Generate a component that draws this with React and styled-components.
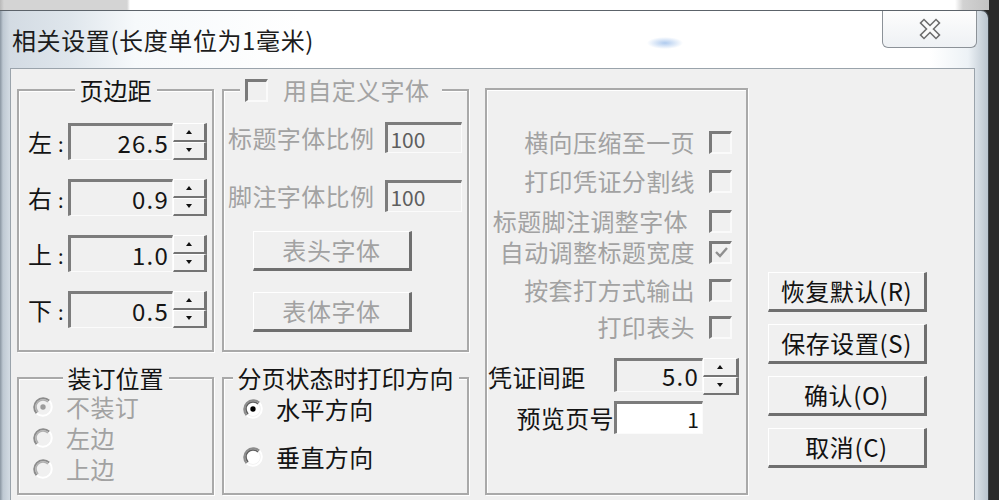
import React from "react";
import styled, { createGlobalStyle } from "styled-components";

const FONT = `"Noto Sans CJK SC", "Noto Sans", sans-serif`;

const margins = [
  { label: "左", value: "26.5" },
  { label: "右", value: "0.9" },
  { label: "上", value: "1.0" },
  { label: "下", value: "0.5" },
];

const options = [
  { text: "横向压缩至一页", mt: 40 },
  { text: "打印凭证分割线", mt: 15 },
  { text: "标题脚注调整字体", mt: 16, shift: 7 },
  { text: "自动调整标题宽度", mt: 7, checked: true },
  { text: "按套打方式输出", mt: 14 },
  { text: "打印表头", mt: 13 },
];

const actions = ["恢复默认(R)", "保存设置(S)", "确认(O)", "取消(C)"];

function Radio({ checked, disabled }) {
  return (
    <RadioMark viewBox="0 0 20 20">
      <path d="M3.64 16.36A9 9 0 0 1 16.36 3.64" stroke="#8c8c8c" strokeWidth="2" fill="none" />
      <path d="M16.36 3.64A9 9 0 0 1 3.64 16.36" stroke="#ffffff" strokeWidth="2" fill="none" />
      <circle cx="10" cy="10" r="7" fill={disabled ? "#f0f0f0" : "#ffffff"} />
      <path
        d="M5.05 14.95A7 7 0 0 1 14.95 5.05"
        stroke={disabled ? "#b0b0b0" : "#606060"}
        strokeWidth="1.6"
        fill="none"
      />
      {checked && <circle cx="10" cy="10" r="2.7" fill={disabled ? "#9c9c9c" : "#000"} />}
    </RadioMark>
  );
}

function Spinner({ width }) {
  return (
    <SpinBox $w={width}>
      <SpinBtn>
        <ArrowUp />
      </SpinBtn>
      <SpinBtn>
        <ArrowDown />
      </SpinBtn>
    </SpinBox>
  );
}

function CheckBox({ checked }) {
  return (
    <Check>
      {checked && (
        <svg width="17" height="17" viewBox="0 0 17 17">
          <polyline points="3,8 7,12 14,4" stroke="#8f8f8f" strokeWidth="2.4" fill="none" />
        </svg>
      )}
    </Check>
  );
}

export default function App() {
  return (
    <Screen>
      <GlobalStyle />
      <Desktop>
        <BehindStrip />
        <Window>
          <TitleBar>
            <Title>相关设置(长度单位为1毫米)</Title>
            <CloseButton>
              <svg width="26" height="22" viewBox="0 0 26 22">
                <path d="M7 5 L19 17 M19 5 L7 17" stroke="#6c6c6c" strokeWidth="6.5" strokeLinecap="square" />
                <path d="M7 5 L19 17 M19 5 L7 17" stroke="#fbfbfb" strokeWidth="3.4" strokeLinecap="square" />
              </svg>
            </CloseButton>
          </TitleBar>
          <Frame>
            <Client>
              <Group>
                <Legend>页边距</Legend>
                <MarginList>
                  {margins.map((m) => (
                    <MarginRow key={m.label}>
                      <MarginLabel>
                        {m.label}
                        <Colon>:</Colon>
                      </MarginLabel>
                      <Edit $w={105} $h={37}>
                        <Value>{m.value}</Value>
                      </Edit>
                      <Spinner width={34} />
                    </MarginRow>
                  ))}
                </MarginList>
              </Group>

              <Group>
                <Legend $left={16} $dim>
                  <CheckBox />
                  <LegendText>用自定义字体</LegendText>
                </Legend>
                <FontList>
                  <FontRow>
                    <DimLabel>标题字体比例</DimLabel>
                    <Edit $w={77} $h={31} $left>
                      <SmallValue>100</SmallValue>
                    </Edit>
                  </FontRow>
                  <FontRow $mt={27}>
                    <DimLabel>脚注字体比例</DimLabel>
                    <Edit $w={77} $h={32} $left>
                      <SmallValue>100</SmallValue>
                    </Edit>
                  </FontRow>
                  <PushButton $dim $mt={19} $ml={25}>表头字体</PushButton>
                  <PushButton $dim $mt={21} $ml={25}>表体字体</PushButton>
                </FontList>
              </Group>

              <SideGroup>
                <OptionList>
                  {options.map((o) => (
                    <OptionRow key={o.text} $mt={o.mt}>
                      <DimLabel style={{ marginRight: o.shift || 0 }}>{o.text}</DimLabel>
                      <CheckBox checked={o.checked} />
                    </OptionRow>
                  ))}
                </OptionList>
                <SpinGrid>
                  <FieldLabel>凭证间距</FieldLabel>
                  <SpinField>
                    <Edit $w={89} $h={34}>
                      <Value>5.0</Value>
                    </Edit>
                    <Spinner width={36} />
                  </SpinField>
                  <FieldLabel $end>预览页号</FieldLabel>
                  <Edit $w={89} $h={33} $white>
                    <SmallValue $dark>1</SmallValue>
                  </Edit>
                </SpinGrid>
              </SideGroup>

              <ButtonColumn>
                {actions.map((a) => (
                  <PushButton key={a}>{a}</PushButton>
                ))}
              </ButtonColumn>

              <Group>
                <Legend>装订位置</Legend>
                <RadioList $pt={5} $pl={14} $gap={7}>
                  <RadioRow>
                    <Radio checked disabled />
                    <DimLabel>不装订</DimLabel>
                  </RadioRow>
                  <RadioRow>
                    <Radio disabled />
                    <DimLabel>左边</DimLabel>
                  </RadioRow>
                  <RadioRow>
                    <Radio disabled />
                    <DimLabel>上边</DimLabel>
                  </RadioRow>
                </RadioList>
              </Group>

              <Group>
                <Legend>分页状态时打印方向</Legend>
                <RadioList $pt={7} $pl={19} $gap={24}>
                  <RadioRow>
                    <Radio checked />
                    <FieldLabel>水平方向</FieldLabel>
                  </RadioRow>
                  <RadioRow>
                    <Radio />
                    <FieldLabel>垂直方向</FieldLabel>
                  </RadioRow>
                </RadioList>
              </Group>
            </Client>
          </Frame>
        </Window>
      </Desktop>
    </Screen>
  );
}

// Styles
const GlobalStyle = createGlobalStyle`
  body {
    margin: 0;
    background: #2a2a2a;
  }
  * {
    box-sizing: border-box;
  }
`;

const Screen = styled.div`
  width: 999px;
  height: 500px;
  overflow: hidden;
  display: flex;
  background: #2a2a2a;
  font-family: ${FONT};
`;

const Desktop = styled.div`
  width: 989px;
  display: flex;
  flex-direction: column;
`;

const BehindStrip = styled.div`
  height: 10px;
  flex: none;
  background: linear-gradient(
    90deg,
    #b9b9b9 0,
    #d4d4d4 4px,
    #d4d4d4 127px,
    #ffffff 130px,
    #ffffff 955px,
    #d2d2d2 963px,
    #c2c2c2 989px
  );
`;

const Window = styled.div`
  flex: 1;
  display: flex;
  flex-direction: column;
  border-top: 1px solid #5c636a;
  border-right: 1px solid #3d4349;
  border-top-right-radius: 8px;
  background: linear-gradient(
    90deg,
    #8995a1 0,
    #bfc9d3 3px,
    #d3dbe3 10px,
    #dfe6ec 70px,
    #f6f9fb 135px,
    #ffffff 300px,
    #ffffff 930px,
    #edf2f6 968px,
    #bac5cf 988px
  );
`;

const TitleBar = styled.div`
  height: 57px;
  flex: none;
  display: flex;
  justify-content: space-between;
  align-items: flex-start;
  padding-left: 12px;
  background: radial-gradient(
    ellipse 18px 6px at 665px 32px,
    rgba(110, 160, 225, 0.55),
    rgba(110, 160, 225, 0)
  );
`;

const Title = styled.div`
  margin-top: 16px;
  font-size: 24px;
  line-height: 26px;
  color: #1c1c1c;
  letter-spacing: 0.6px;
`;

const CloseButton = styled.div`
  width: 95px;
  height: 37px;
  margin-right: 11px;
  display: flex;
  align-items: center;
  justify-content: center;
  border: 1px solid #8c9298;
  border-top: none;
  border-radius: 0 0 6px 6px;
  background: linear-gradient(#fdfdfd, #eef1f4);
`;

const Frame = styled.div`
  flex: 1;
  display: flex;
  padding: 0 13px 0 10px;
`;

const Client = styled.div`
  flex: 1;
  background: #f0f0f0;
  border: 1px solid #9aa3ab;
  border-bottom: none;
  padding: 9px 0 0 6px;
  display: grid;
  grid-template-columns: 197px 247px 271px 171px;
  grid-template-rows: 274px 129px;
  gap: 14px 8px;
  align-content: start;
`;

const Group = styled.fieldset`
  margin: 0;
  padding: 0;
  min-width: 0;
  border: 2px solid #a9a9a9;
  box-shadow: inset 1px 1px 0 #ffffff, 1px 1px 0 #ffffff;
`;

const SideGroup = styled(Group)`
  grid-column: 3;
  grid-row: 1 / span 2;
  margin: 10px 0 0 8px;
`;

const Legend = styled.legend`
  margin: ${(p) => (p.$left != null ? `0 0 0 ${p.$left}px` : "0 auto")};
  padding: ${(p) => (p.$left != null ? "0 13px 0 5px" : "0 5px")};
  display: flex;
  align-items: center;
  gap: 15px;
  font-size: 24px;
  line-height: 24px;
  height: 24px;
  color: ${(p) => (p.$dim ? "#a3a3a3" : "#141414")};
  background: #f0f0f0;
`;

const LegendText = styled.span`
  letter-spacing: 0.4px;
`;

const MarginList = styled.div`
  display: flex;
  flex-direction: column;
  gap: 19px;
  padding: 21px 0 0 9px;
`;

const MarginRow = styled.div`
  display: flex;
  align-items: center;
  height: 37px;
`;

const MarginLabel = styled.div`
  width: 40px;
  font-size: 24px;
  line-height: 24px;
  color: #141414;
  padding-top: 3px;
`;

const Colon = styled.span`
  margin-left: 6px;
  font-size: 20px;
`;

const Edit = styled.div`
  width: ${(p) => p.$w}px;
  height: ${(p) => p.$h}px;
  flex: none;
  display: flex;
  align-items: center;
  justify-content: ${(p) => (p.$left ? "flex-start" : "flex-end")};
  padding: ${(p) => (p.$left ? "0 0 0 2px" : "0 3px 0 0")};
  border-style: solid;
  border-width: 3px 1px 1px 3px;
  border-color: #7c7c7c #fbfbfb #fbfbfb #7c7c7c;
  background: ${(p) => (p.$white ? "#ffffff" : "#f0f0f0")};
`;

const Value = styled.span`
  font-size: 24px;
  line-height: 24px;
  letter-spacing: 1.2px;
  color: #151515;
`;

const SmallValue = styled.span`
  font-size: 21px;
  line-height: 22px;
  color: ${(p) => (p.$dark ? "#151515" : "#5e5e5e")};
`;

const SpinBox = styled.div`
  width: ${(p) => p.$w}px;
  height: 37px;
  flex: none;
  display: flex;
  flex-direction: column;
`;

const SpinBtn = styled.div`
  flex: 1;
  display: flex;
  align-items: center;
  justify-content: center;
  border-style: solid;
  border-width: 1px 3px 2px 1px;
  border-color: #ffffff #747474 #747474 #ffffff;
  background: #f0f0f0;
`;

const ArrowUp = styled.span`
  width: 0;
  height: 0;
  border-left: 3.5px solid transparent;
  border-right: 3.5px solid transparent;
  border-bottom: 4px solid #111;
`;

const ArrowDown = styled.span`
  width: 0;
  height: 0;
  border-left: 3.5px solid transparent;
  border-right: 3.5px solid transparent;
  border-top: 4px solid #111;
`;

const FontList = styled.div`
  display: flex;
  flex-direction: column;
  align-items: flex-start;
  padding: 20px 0 0 4px;
`;

const FontRow = styled.div`
  display: flex;
  align-items: center;
  gap: 11px;
  margin-top: ${(p) => p.$mt || 0}px;
`;

const DimLabel = styled.span`
  font-size: 24px;
  line-height: 24px;
  letter-spacing: 0.4px;
  color: #a2a2a2;
  white-space: nowrap;
`;

const FieldLabel = styled.span`
  font-size: 24px;
  line-height: 24px;
  letter-spacing: 0.4px;
  color: #141414;
  white-space: nowrap;
  justify-self: ${(p) => (p.$end ? "end" : "start")};
`;

const PushButton = styled.div`
  width: 159px;
  height: 40px;
  flex: none;
  display: flex;
  align-items: center;
  justify-content: center;
  margin: ${(p) => p.$mt || 0}px 0 0 ${(p) => p.$ml || 0}px;
  border-style: solid;
  border-width: 1px 3px 3px 1px;
  border-color: #ffffff #6f6f6f #6f6f6f #ffffff;
  background: #f0f0f0;
  font-size: 24px;
  line-height: 24px;
  letter-spacing: 0.6px;
  color: ${(p) => (p.$dim ? "#a2a2a2" : "#121212")};
`;

const Check = styled.span`
  width: 23px;
  height: 23px;
  flex: none;
  display: flex;
  align-items: center;
  justify-content: center;
  border-style: solid;
  border-width: 3px 2px 2px 3px;
  border-color: #7a7a7a #fafafa #fafafa #7a7a7a;
  background: #f0f0f0;
`;

const OptionList = styled.div`
  display: flex;
  flex-direction: column;
  padding-right: 14px;
`;

const OptionRow = styled.div`
  display: flex;
  justify-content: flex-end;
  align-items: center;
  gap: 14px;
  height: 24px;
  margin-top: ${(p) => p.$mt}px;
`;

const SpinGrid = styled.div`
  display: grid;
  grid-template-columns: 126px auto;
  align-items: center;
  row-gap: 6px;
  margin-top: 19px;
  padding-left: 1px;
`;

const SpinField = styled.div`
  display: flex;
  align-items: flex-start;
  height: 37px;
`;

const ButtonColumn = styled.div`
  grid-column: 4;
  grid-row: 1 / span 2;
  margin-left: 12px;
  padding-top: 194px;
  display: flex;
  flex-direction: column;
  gap: 12px;
`;

const RadioList = styled.div`
  display: flex;
  flex-direction: column;
  gap: ${(p) => p.$gap}px;
  padding: ${(p) => p.$pt}px 0 0 ${(p) => p.$pl}px;
`;

const RadioRow = styled.div`
  display: flex;
  align-items: center;
  gap: 13px;
  height: 24px;
`;

const RadioMark = styled.svg`
  width: 20px;
  height: 20px;
  flex: none;
`;
